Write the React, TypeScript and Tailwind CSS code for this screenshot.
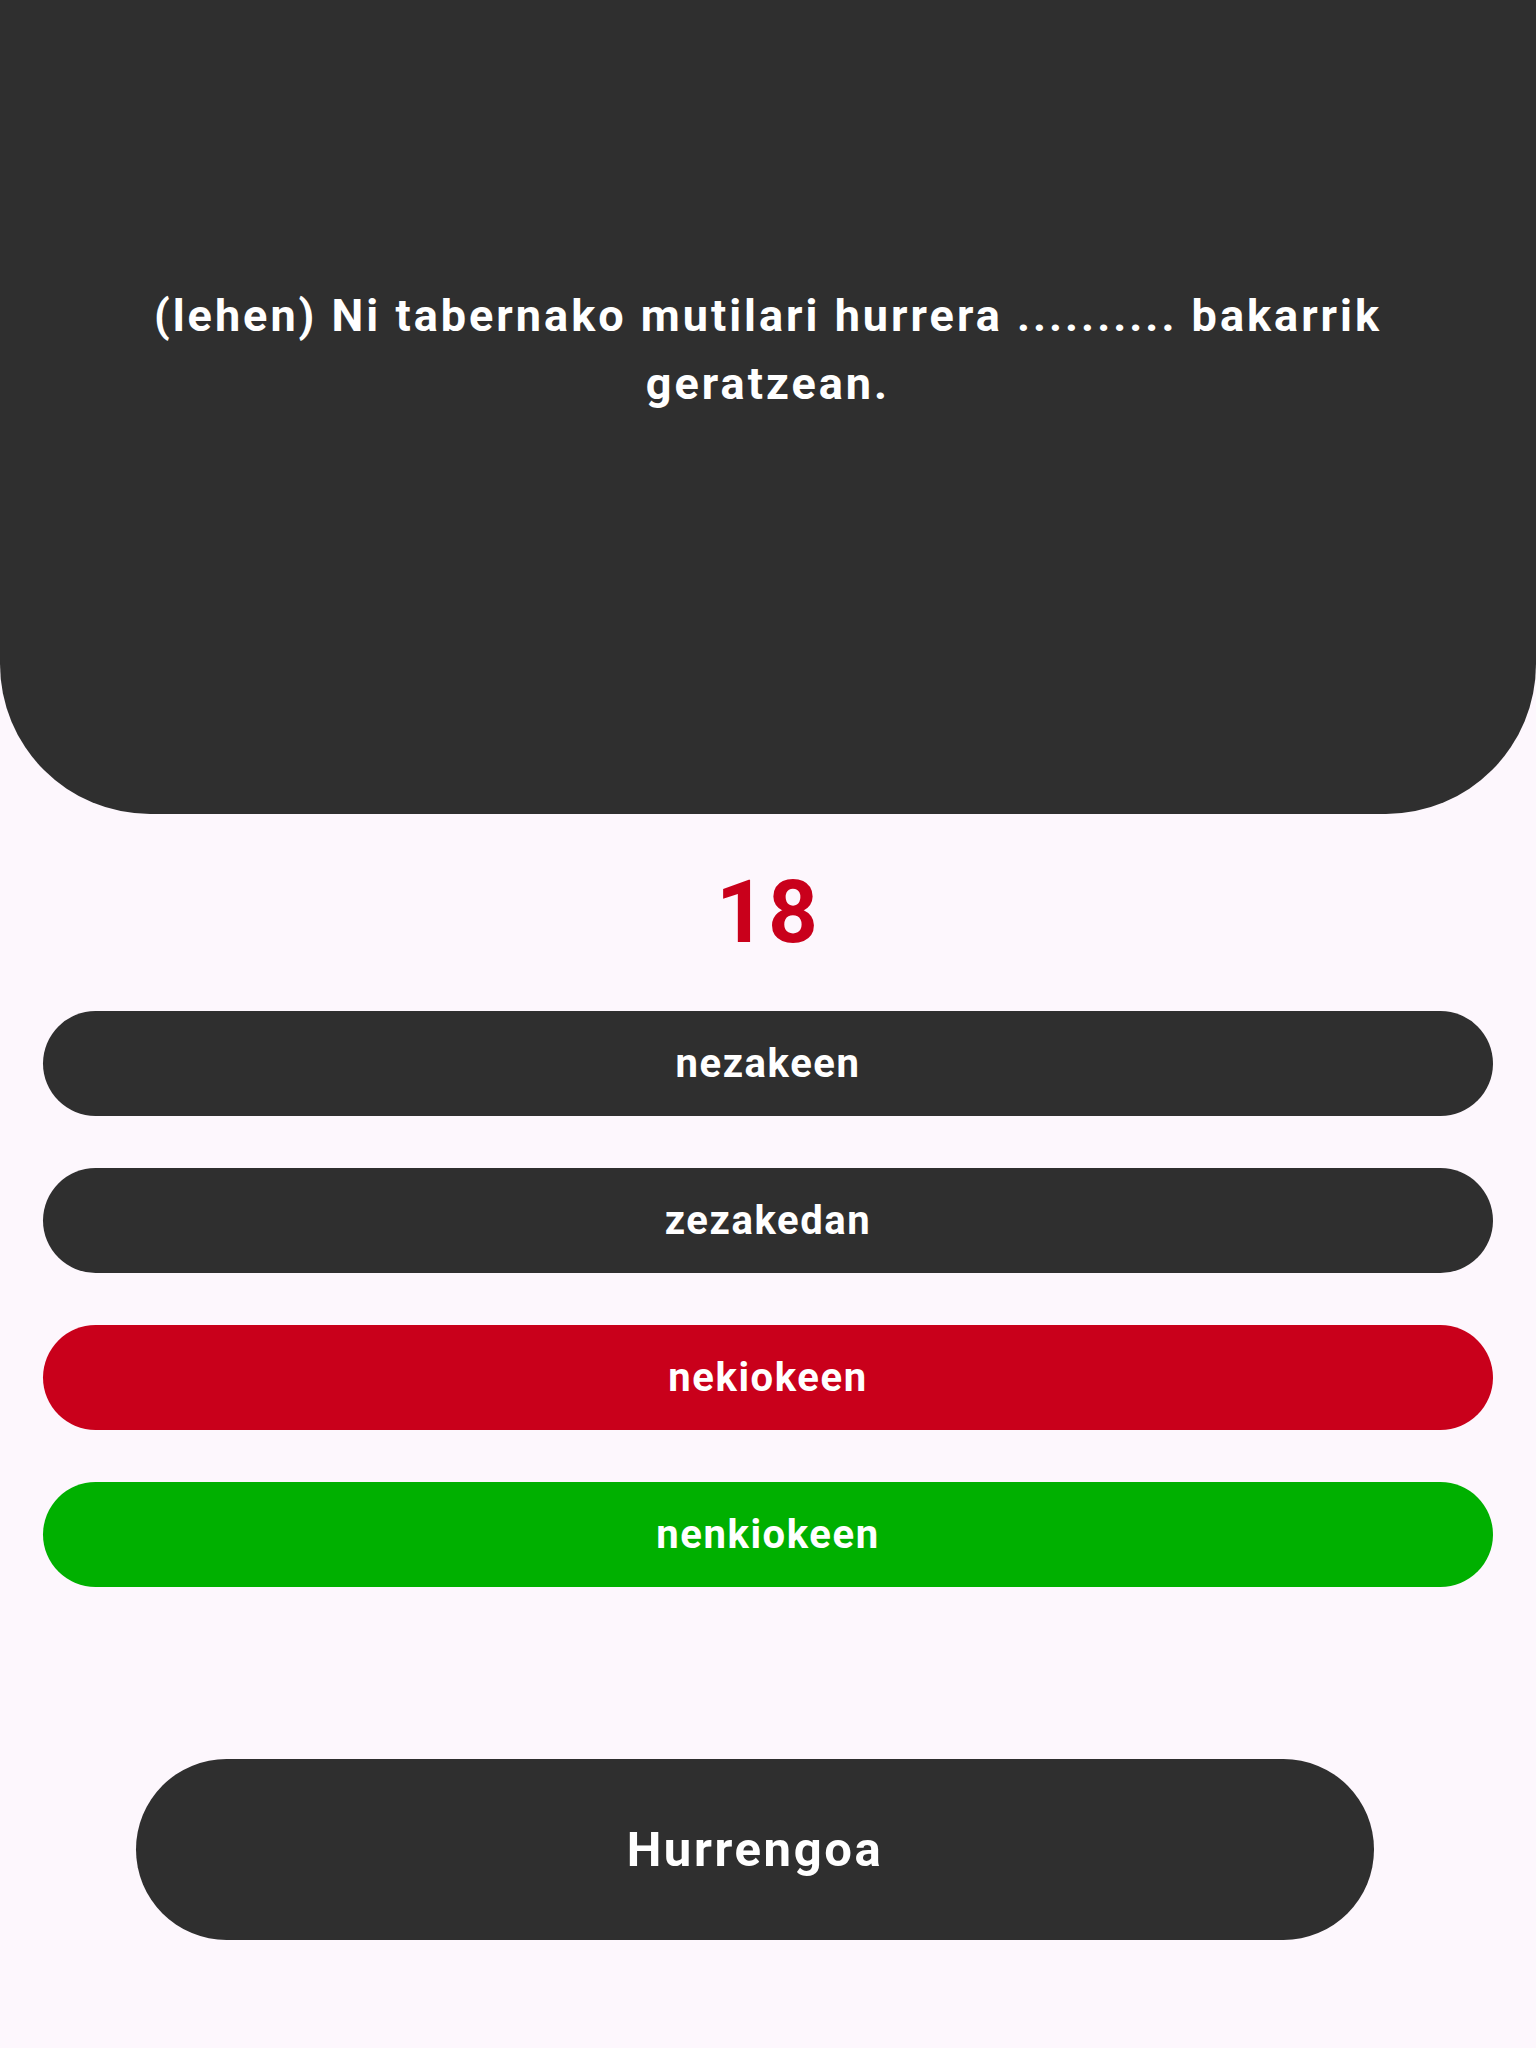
import React from "react";

const options = [
  { label: "nezakeen", cls: "bg-[#2f2f2f]" },
  { label: "zezakedan", cls: "bg-[#2f2f2f]" },
  { label: "nekiokeen", cls: "bg-[#c9001b]" },
  { label: "nenkiokeen", cls: "bg-[#00b000]" },
];

export default function App() {
  return (
    <div className="min-h-[2048px] w-full bg-[#fdf7fd] font-['Roboto','Liberation_Sans',sans-serif]">
      <div className="flex h-[814px] w-full flex-col items-center rounded-b-[150px] bg-[#2f2f2f] px-[100px] pt-[282px]">
        <p className="text-center text-[45px] font-bold leading-[68px] tracking-[3px] text-white">
          (lehen) Ni tabernako mutilari hurrera .......... bakarrik geratzean.
        </p>
      </div>
      <div className="flex h-[197px] items-center justify-center">
        <span className="text-[87px] font-bold leading-none tracking-[2px] text-[#c9001b]">18</span>
      </div>
      <div className="flex flex-col gap-[52px] px-[43px]">
        {options.map((o) => (
          <div
            key={o.label}
            className={`flex h-[105px] items-center justify-center rounded-full ${o.cls}`}
          >
            <span className="text-[40px] font-bold tracking-[1.6px] text-white">{o.label}</span>
          </div>
        ))}
      </div>
      <div className="mt-[172px] pl-[136px]">
        <div className="flex h-[181px] w-[1238px] items-center justify-center rounded-full bg-[#2f2f2f]">
          <span className="text-[49px] font-bold tracking-[2.6px] text-white">Hurrengoa</span>
        </div>
      </div>
    </div>
  );
}
